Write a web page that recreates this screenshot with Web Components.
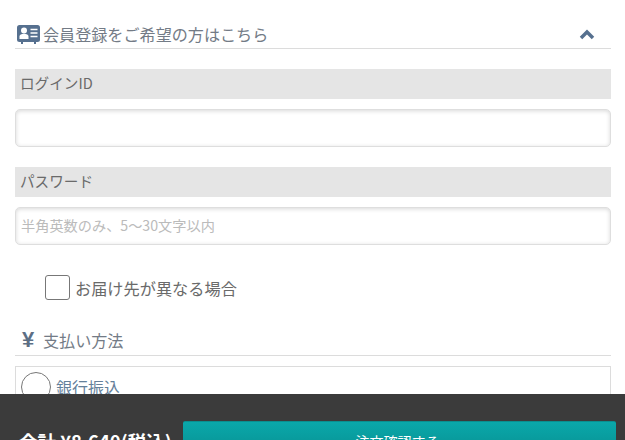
<!DOCTYPE html>
<html lang="ja">
<head>
<meta charset="utf-8">
<title>注文確認</title>
<style>
    html, body { margin: 0; height: 100%; overflow: hidden; background: #fff; }
    body { font-family: "Noto Sans CJK JP", "Liberation Sans", sans-serif; color: #666; }
</style>
</head>
<body>
<order-form></order-form>
<script>
const FONT = `"Noto Sans CJK JP", "Liberation Sans", sans-serif`;

class SectionTitle extends HTMLElement {
    constructor(){
        super();
        this.attachShadow({ mode : 'open' });
        this.shadowRoot.innerHTML = `
            <style>
                :host{
                    display: flex;
                    align-items: center;
                    height: var(--title-height, 28px);
                    margin: 0 14px 0 15px;
                    border-bottom: 1px solid #dcdcdc;
                    font: 16.1px/20px ${FONT};
                    color: #737b86;
                }
                .icon{ display: flex; width: 28px; flex: none; }
                .text{ flex: 1; white-space: nowrap; }
                .end{ display: flex; padding-right: 16px; }
            </style>
            <span class="icon"><slot name="icon"></slot></span>
            <span class="text"><slot></slot></span>
            <span class="end"><slot name="end"></slot></span>`;
    }
}

class FieldRow extends HTMLElement {
    get label(){ return this.getAttribute('label') }
    get placeholder(){ return this.getAttribute('placeholder') || '' }
    constructor(){
        super();
        this.attachShadow({ mode : 'open' });
        this.shadowRoot.innerHTML = `
            <style>
                :host{ display: block; margin: 0 14px 20px 15px; }
                .label{
                    height: 30px;
                    padding-left: 5px;
                    background: #e5e5e5;
                    font: 14.6px/28px ${FONT};
                    color: #6a6a6a;
                }
                input{
                    display: block;
                    box-sizing: border-box;
                    width: 100%;
                    height: 38px;
                    margin-top: 10px;
                    padding: 0 5px 2px;
                    border: 1px solid #dedede;
                    border-radius: 5px;
                    outline: none;
                    background: #fff;
                    box-shadow: inset 0 1px 4px rgba(0,0,0,.16);
                    font: 14.2px ${FONT};
                }
                input::placeholder{ color: #bbb; opacity: 1; }
            </style>
            <div class="label">${this.label}</div>
            <input type="text" placeholder="${this.placeholder}">`;
    }
}

class CheckRow extends HTMLElement {
    constructor(){
        super();
        this.attachShadow({ mode : 'open' });
        this.shadowRoot.innerHTML = `
            <style>
                :host{
                    display: flex;
                    align-items: flex-start;
                    gap: 5px;
                    margin: 30px 0 0 45px;
                    font: 16.2px/25px ${FONT};
                    color: #6a6a6a;
                }
                .box{
                    box-sizing: border-box;
                    width: 25px;
                    height: 25px;
                    border: 1px solid #777;
                    border-radius: 3px;
                    background: #fff;
                }
                .text{ padding-top: 1px; }
            </style>
            <span class="box"></span><span class="text"><slot></slot></span>`;
    }
}

class RadioBox extends HTMLElement {
    constructor(){
        super();
        this.attachShadow({ mode : 'open' });
        this.shadowRoot.innerHTML = `
            <style>
                :host{
                    display: flex;
                    align-items: center;
                    gap: 5px;
                    margin: 10px 14px 0 15px;
                    padding: 5px;
                    border: 1px solid #dcdcdc;
                    font: 16px/30px ${FONT};
                    color: #64809a;
                }
                .dot{
                    box-sizing: border-box;
                    width: 30px;
                    height: 30px;
                    border: 1px solid #777;
                    border-radius: 50%;
                    background: #fff;
                }
            </style>
            <span class="dot"></span><slot></slot>`;
    }
}

class OrderFooter extends HTMLElement {
    constructor(){
        super();
        this.attachShadow({ mode : 'open' });
        this.shadowRoot.innerHTML = `
            <style>
                :host{
                    position: fixed;
                    left: 0;
                    right: 0;
                    top: 394px;
                    height: 80px;
                    display: flex;
                    align-items: flex-start;
                    padding: 27px 9px 0 19px;
                    box-sizing: border-box;
                    background: #3b3b3b;
                    font-family: ${FONT};
                }
                .total{
                    width: 164px;
                    flex: none;
                    margin-top: 7px;
                    font: bold 18.5px/26px ${FONT};
                    color: #fff;
                    white-space: nowrap;
                }
                button{
                    flex: 1;
                    height: 50px;
                    padding: 0 4px 12px 0;
                    border: 0;
                    border-top: 1px solid #0a8f90;
                    border-radius: 2px;
                    background: linear-gradient(#0aa8aa, #078486);
                    font: 14px ${FONT};
                    color: #fff;
                }
            </style>
            <span class="total"><slot name="total"></slot></span>
            <button><slot name="action"></slot></button>`;
    }
}

class OrderForm extends HTMLElement {
    constructor(){
        super();
        this.attachShadow({ mode : 'open' });
        this.shadowRoot.innerHTML = `
            <style>
                :host{ display: block; padding-top: 20px; }
                field-row:first-of-type{ margin-top: 20px; }
                .pay{ --title-height: 30px; margin-top: 24px; }
                .yen{ font: bold 22px/20px "Liberation Sans", sans-serif; color: #5d6f85; padding-left: 7px; }
            </style>
            <section-title>
                <svg slot="icon" width="25" height="20" viewBox="0 0 25 20">
                    <rect x="2" y="1" width="23" height="17" rx="2.5" fill="#56708f"/>
                    <path d="M7 18v2M20 18v2" stroke="#56708f" stroke-width="2"/>
                    <circle cx="9" cy="6.500" r="3" fill="#fff"/>
                    <path d="M4.500 15v-2.500c0-1.800 1.800-2.800 4.500-2.800s4.500 1 4.500 2.800V15z" fill="#fff"/>
                    <path d="M15.500 5.500h7M15.500 9h7M15.500 12.500h7" stroke="#fff" stroke-width="1.500"/>
                </svg>
                会員登録をご希望の方はこちら
                <svg slot="end" width="16" height="11" viewBox="0 0 16 11">
                    <path d="M2 9l6-6 6 6" fill="none" stroke="#56708f" stroke-width="3.500"/>
                </svg>
            </section-title>
            <field-row label="ログインID"></field-row>
            <field-row label="パスワード" placeholder="半角英数のみ、5～30文字以内"></field-row>
            <check-row>お届け先が異なる場合</check-row>
            <section-title class="pay">
                <span slot="icon" class="yen">¥</span>
                支払い方法
            </section-title>
            <radio-box>銀行振込</radio-box>
            <order-footer>
                <span slot="total">合計 ¥8,640(税込)</span>
                <span slot="action">注文確認する</span>
            </order-footer>`;
    }
}

window.customElements.define('section-title', SectionTitle)
window.customElements.define('field-row', FieldRow)
window.customElements.define('check-row', CheckRow)
window.customElements.define('radio-box', RadioBox)
window.customElements.define('order-footer', OrderFooter)
window.customElements.define('order-form', OrderForm)
</script>
</body>
</html>
